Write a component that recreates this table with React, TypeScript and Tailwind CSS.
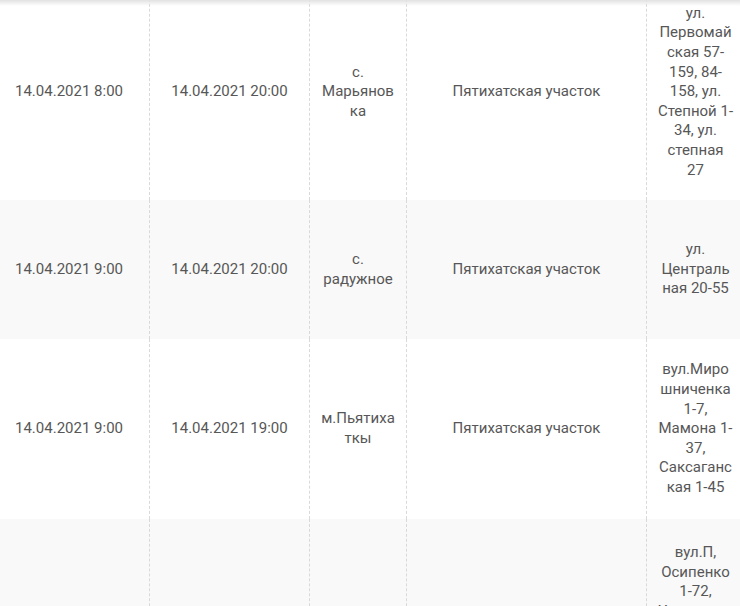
import React from 'react'

interface Row {
  start: string
  end: string
  place: string[]
  area: string
  streets: string[]
  height: string
  shaded: boolean
  streetsTop?: boolean
}

const rows: Row[] = [
  {
    start: '14.04.2021 8:00',
    end: '14.04.2021 20:00',
    place: ['с.', 'Марьянов', 'ка'],
    area: 'Пятихатская участок',
    streets: ['ул.', 'Первомай', 'ская 57-', '159, 84-', '158, ул.', 'Степной 1-', '34, ул.', 'степная', '27'],
    height: 'h-[220px] -mt-[20px] pt-[4px]',
    shaded: false,
  },
  {
    start: '14.04.2021 9:00',
    end: '14.04.2021 20:00',
    place: ['с.', 'радужное'],
    area: 'Пятихатская участок',
    streets: ['ул.', 'Централь', 'ная 20-55'],
    height: 'h-[139px]',
    shaded: true,
  },
  {
    start: '14.04.2021 9:00',
    end: '14.04.2021 19:00',
    place: ['м.Пьятиха', 'ткы'],
    area: 'Пятихатская участок',
    streets: ['вул.Миро', 'шниченка', '1-7,', 'Мамона 1-', '37,', 'Саксаганс', 'кая 1-45'],
    height: 'h-[180px]',
    shaded: false,
  },
  {
    start: '',
    end: '',
    place: [],
    area: '',
    streets: ['вул.П,', 'Осипенко', '1-72,', 'Украинска'],
    height: 'h-[100px]',
    shaded: true,
    streetsTop: true,
  },
]

const Lines = ({ lines }: { lines: string[] }) => (
  <div>
    {lines.map((l, i) => (
      <div key={i}>{l}</div>
    ))}
  </div>
)

const cell = 'flex items-center justify-center border-l border-dashed border-[#d9d9d9]'

export default function App() {
  return (
    <div className="relative w-[740px] h-[606px] overflow-hidden bg-white">
      <div
        className="ml-[-11px] w-[755px] text-[15px] leading-[19.6px] text-[#575757]"
        style={{ fontFamily: 'Roboto, "Liberation Sans", sans-serif' }}
      >
        {rows.map((r, i) => (
          <div
            key={i}
            className={`grid grid-cols-[160px_160px_97px_240px_98px] text-center ${r.shaded ? 'bg-[#f9f9f9]' : 'bg-white'} ${r.height}`}
          >
            <div className="flex items-center justify-center px-3">{r.start}</div>
            <div className={`${cell} px-3`}>{r.end}</div>
            <div className={`${cell} px-1`}>
              <Lines lines={r.place} />
            </div>
            <div className={`${cell} px-3`}>{r.area}</div>
            <div
              className={`flex justify-center px-1 border-l border-dashed border-[#d9d9d9] ${r.streetsTop ? 'items-start pt-[24px]' : 'items-center'}`}
            >
              <Lines lines={r.streets} />
            </div>
          </div>
        ))}
      </div>
      <div className="absolute top-0 left-0 right-0 h-[6px] bg-linear-to-b from-[#e2e2e2] to-transparent" />
    </div>
  )
}
